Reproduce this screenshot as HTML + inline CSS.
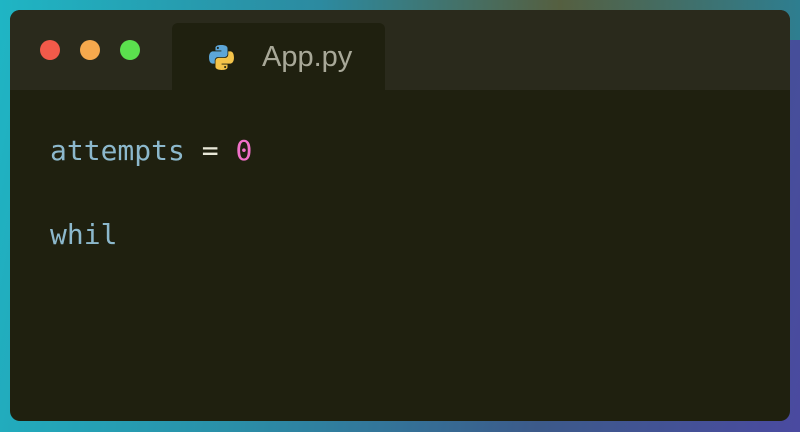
<!DOCTYPE html>
<html><head><style>
html,body{margin:0;padding:0;}
body{width:800px;height:432px;overflow:hidden;background:linear-gradient(100deg,#1fb5c4 0%,#2a8fa8 35%,#3c5a8a 70%,#4a4aa0 100%);position:relative;font-family:"DejaVu Sans Mono","Liberation Mono",monospace;}
.top{position:absolute;left:0;top:0;width:800px;height:40px;background:linear-gradient(90deg,#1fb5c4,#2c8aa0 40%,#555f40 70%,#2e7e90);}
.win{position:absolute;left:10px;top:10px;width:780px;height:411px;border-radius:10px;background:#1f200f;overflow:hidden;}
.bar{position:absolute;left:0;top:0;width:780px;height:80px;background:#2a2a1c;}
.dot{position:absolute;top:30px;width:20px;height:20px;border-radius:50%;}
.tab{position:absolute;left:162px;top:13px;width:213px;height:67px;background:#1f200f;border-radius:6px 6px 0 0;}
.tab span{position:absolute;left:90px;top:18px;font-family:"Liberation Sans",sans-serif;font-size:29px;color:#a8a898;}
.code{position:absolute;left:40px;font-size:28px;color:#8cb8cc;white-space:pre;}
</style></head><body>
<div class="top"></div>
<div class="win">
<div class="bar"></div>
<div class="dot" style="left:30px;background:#f25a4a"></div>
<div class="dot" style="left:70px;background:#f6a94d"></div>
<div class="dot" style="left:110px;background:#5be04e"></div>
<div class="tab">
<svg style="position:absolute;left:36px;top:21px" width="27" height="27" viewBox="0 0 26 26">
<path d="M12.8 1c-6 0-5.6 2.6-5.6 2.6v2.7h5.7v.8H5S1 6.7 1 12.9s3.4 6 3.4 6h2.1v-2.9s-.1-3.4 3.4-3.4h5.7s3.2.1 3.2-3.1V4.3S19.3 1 12.8 1z" fill="#5da6d8"/>
<path d="M13.2 25c6 0 5.6-2.6 5.6-2.6v-2.7h-5.7v-.8H21s4 .4 4-5.8-3.4-6-3.4-6h-2.1v2.9s.1 3.4-3.4 3.4H10.4s-3.2-.1-3.2 3.1v5.2S6.7 25 13.2 25z" fill="#f3c34a"/>
<circle cx="9.5" cy="3.8" r="1" fill="#1f200f"/><circle cx="16.5" cy="22.2" r="1" fill="#1f200f"/>
</svg>
<span>App.py</span></div>
<div class="code" style="top:124px">attempts <span style="color:#e8e8d8">=</span> <span style="color:#f070c8">0</span></div>
<div class="code" style="top:208px">whil</div>
</div>
</body></html>
